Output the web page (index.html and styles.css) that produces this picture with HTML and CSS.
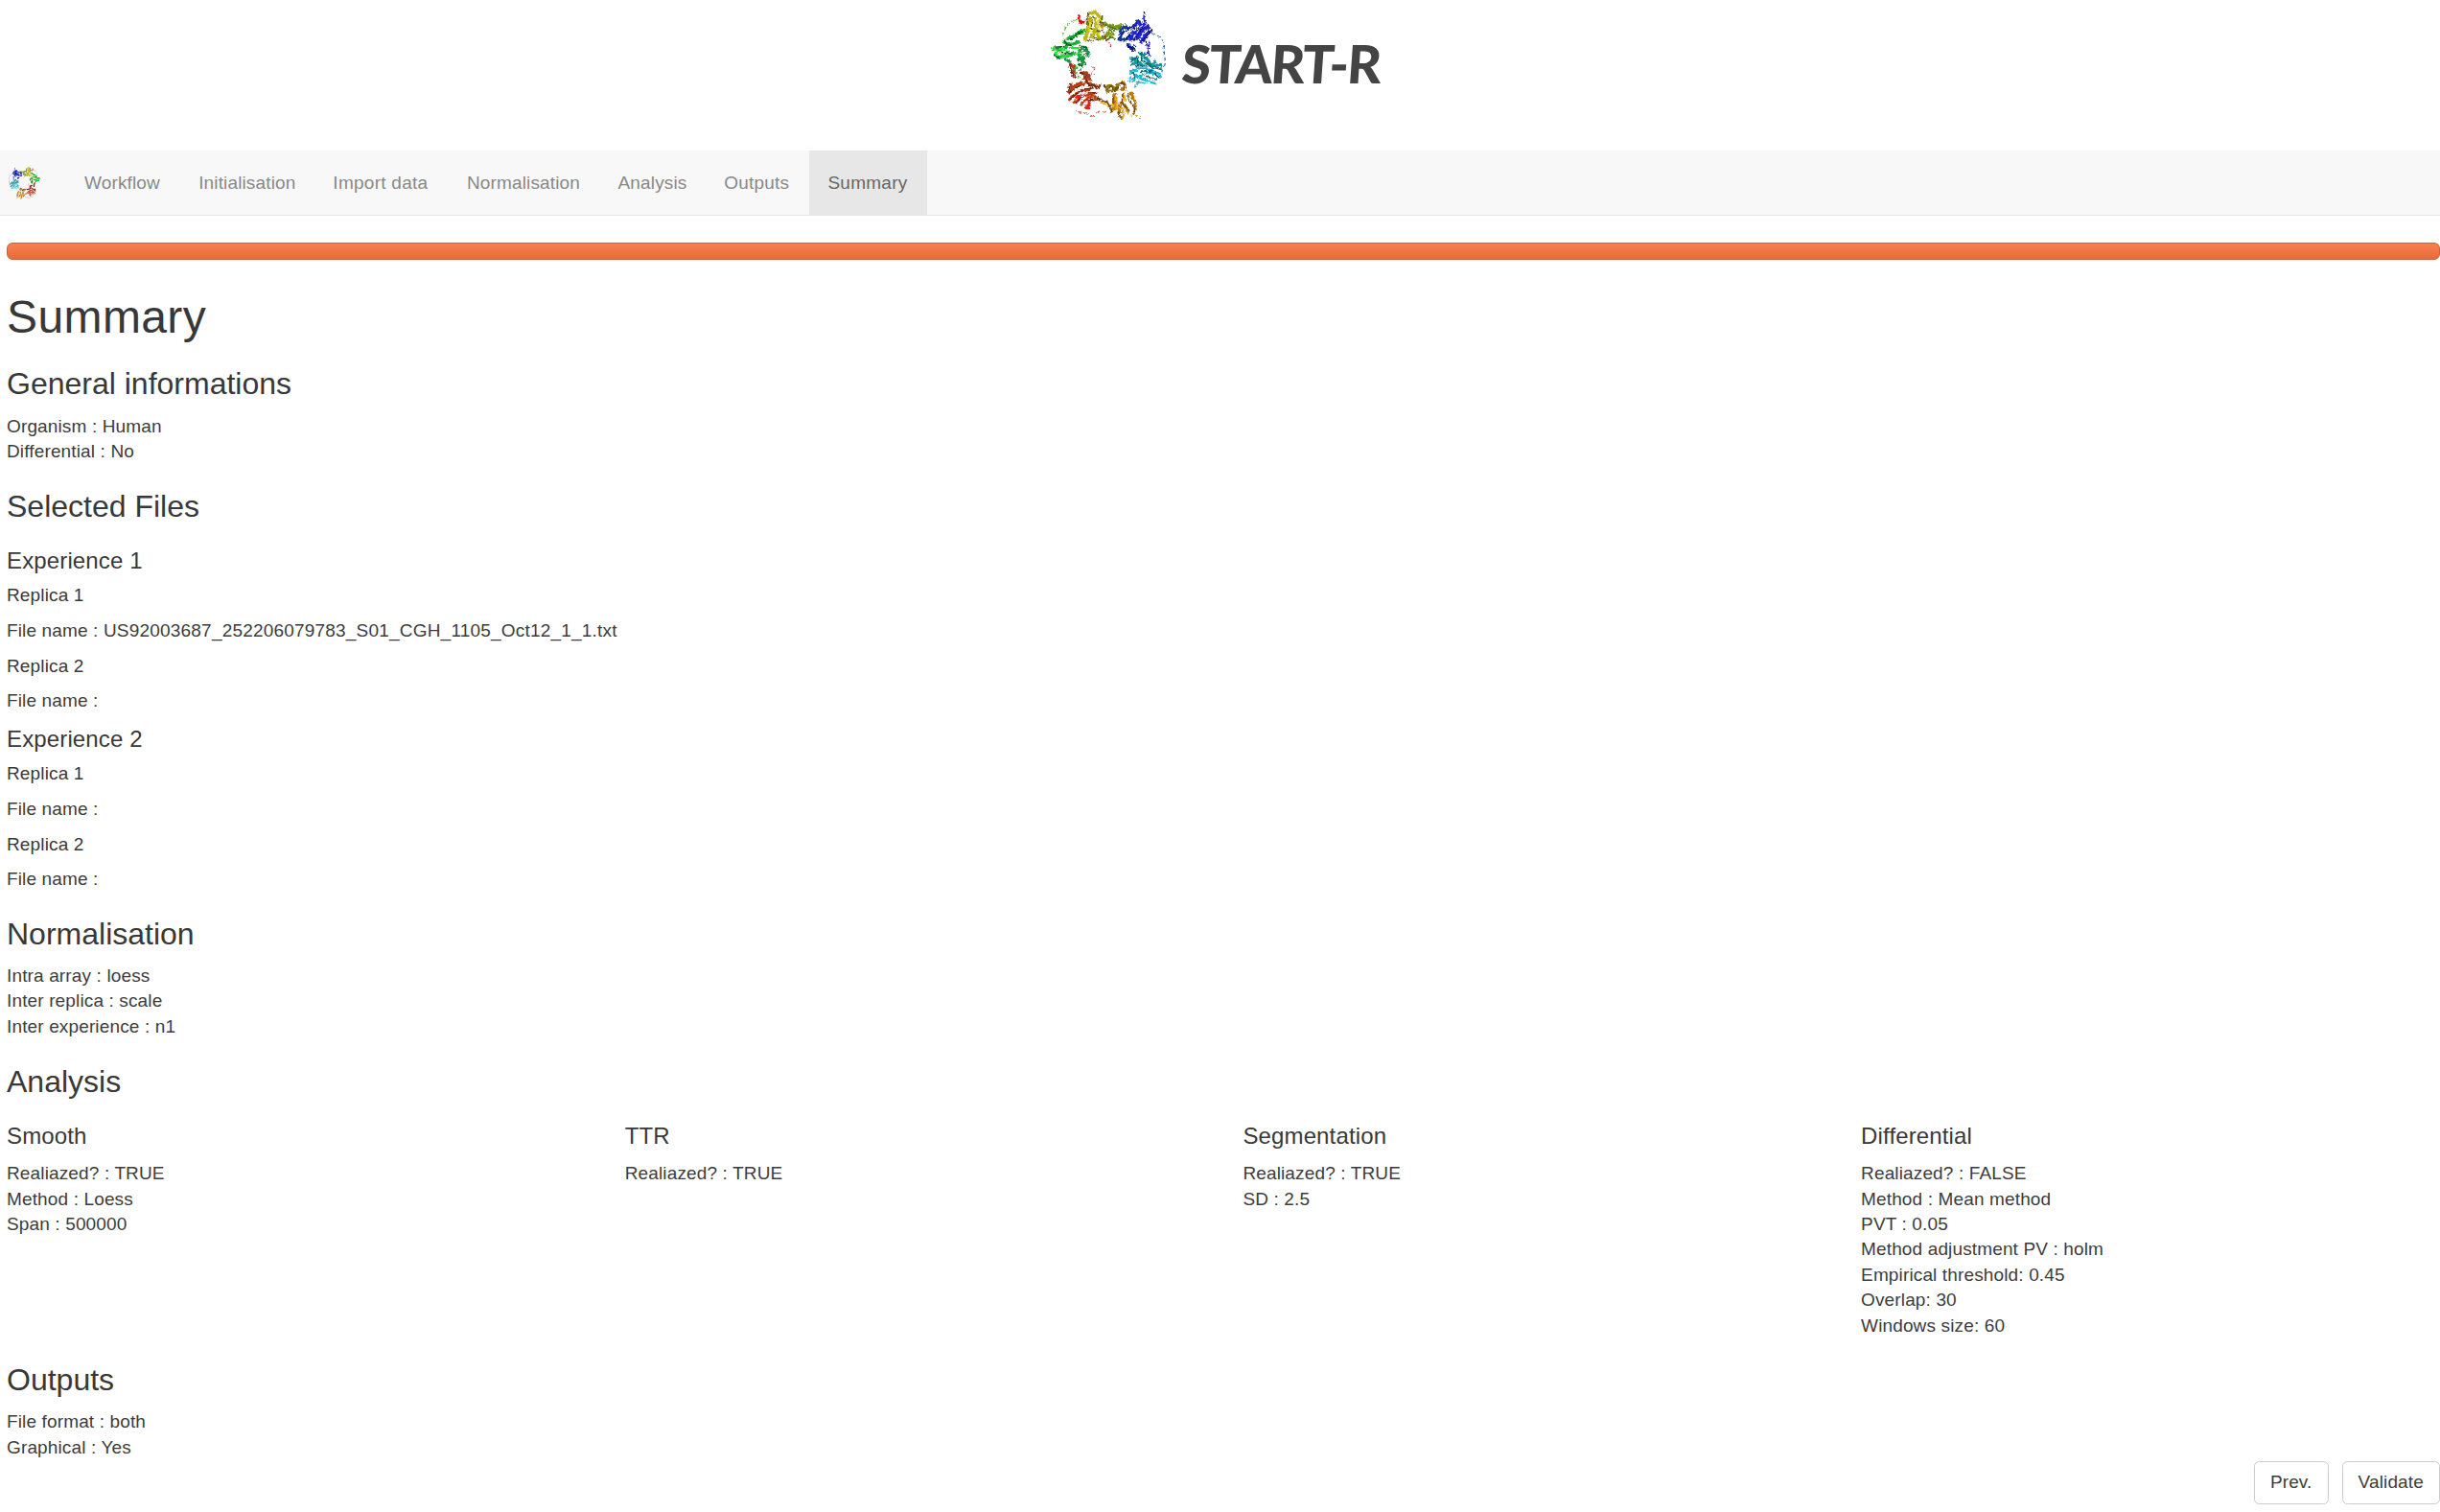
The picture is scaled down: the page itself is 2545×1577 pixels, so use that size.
FILE: index.html
```
<!DOCTYPE html>
<html lang="en">
<head>
<meta charset="utf-8">
<title>START-R</title>
<link rel="stylesheet" href="styles.css">
</head>
<body>
<header class="banner">
<svg class="logo" viewBox="0 0 420 405" aria-hidden="true">
<defs>
<filter id="ragged" x="0" y="0" width="420" height="405" filterUnits="userSpaceOnUse" color-interpolation-filters="sRGB">
<feTurbulence type="turbulence" baseFrequency="0.11" numOctaves="2" seed="4" result="n"/>
<feDisplacementMap in="SourceGraphic" in2="n" scale="11" xChannelSelector="R" yChannelSelector="G"/>
<feOffset dx="-3" dy="-2"/>
</filter>
<g id="ring" fill="none" stroke-linejoin="round">
<!-- yellow / olive lobe -->
<g stroke="#b9b51c" stroke-width="11"><path d="M150 45L172 37L190 58M158 55L148 92L140 130M172 55L174 92L158 120M188 62L195 88M176 95L186 125"/></g>
<g stroke="#dfe02a" stroke-width="5"><path d="M164 60L152 108M180 62L184 112M157 72L150 95"/></g>
<g stroke="#5f6412" stroke-width="5"><path d="M152 38L145 64L151 80M166 50L160 88L166 92M194 48L193 72L208 80M176 98L194 96M166 118L186 126M150 128L166 128"/></g>
<g stroke="#7d9a18" stroke-width="10"><path d="M200 74L232 84L258 80M186 124L206 112L232 106M206 112L216 96"/></g>
<g stroke="#4f7410" stroke-width="5"><path d="M200 80L240 92L262 80M192 112L208 126L222 116L236 124M214 92L234 100"/></g>
<g stroke="#e01010" stroke-width="8"><path d="M122 46L120 62L128 72L140 68"/></g>
<g stroke="#c02040" stroke-width="4" stroke-dasharray="7 5"><path d="M186 66L196 92L208 128L226 148M144 66L158 60"/></g>
<g stroke="#5abf30" stroke-width="4" stroke-dasharray="10 8"><path d="M70 112L78 90L92 70L118 60"/></g>
<!-- green lobe -->
<g stroke="#1fae38" stroke-width="10"><path d="M84 122L108 110L142 92M70 130L96 140L124 130M36 154L66 156L88 142M50 178L84 176L112 166M128 152L120 170L136 184L124 204"/></g>
<g stroke="#28e03a" stroke-width="6"><path d="M34 148L52 158L50 174M60 152L92 164M100 118L136 102M64 180L98 172M92 150L122 150"/></g>
<g stroke="#0b5a20" stroke-width="5"><path d="M76 124L80 138L98 142M92 126L134 98M44 148L78 146M62 166L98 168M122 142L144 148L150 168L136 172M116 188L140 186M118 198L132 210M44 170L60 184"/></g>
<g stroke="#18944a" stroke-width="9"><path d="M126 150L150 162L150 178M118 180L138 190M124 202L142 196M76 184L96 196"/></g>
<!-- blue lobe -->
<g stroke="#173a94" stroke-width="10"><path d="M246 98L270 84L284 92M242 122L266 126L284 108M256 88L250 120M272 138L286 152L296 148"/></g>
<g stroke="#2224d0" stroke-width="11"><path d="M292 86L308 66L316 84M280 128L300 100L326 74M302 124L318 98L344 84M314 136L326 110L350 98"/></g>
<g stroke="#0c1280" stroke-width="5"><path d="M254 108L290 82M270 122L298 84M290 128L316 92L340 78M322 130L342 100L352 94M274 142L288 160L296 142M284 148L298 158M330 126L336 152"/></g>
<g stroke="#2224d0" stroke-width="5"><path d="M326 38L324 58L330 78M342 128L338 168L346 178"/></g>
<g stroke="#2f78b8" stroke-width="4" stroke-dasharray="11 8"><path d="M350 104L376 116L388 138L388 166L392 196L384 218L374 238"/></g>
<!-- cyan lobe -->
<g stroke="#109a9c" stroke-width="10"><path d="M308 164L328 176L344 198M280 182L298 184L296 198L282 200M302 194L324 202L356 204M358 188L356 204L382 206"/></g>
<g stroke="#1cb7d4" stroke-width="7"><path d="M280 226L290 218L306 224M278 244L298 250M302 214L332 214L376 232M308 240L340 228L380 242M290 230L318 248L350 258L366 262"/></g>
<g stroke="#0b6a72" stroke-width="5"><path d="M314 162L318 188L344 202M284 190L306 178L304 202M300 206L338 206L382 218M312 226L350 224L374 244M280 232L292 226L296 246M330 238L366 250M330 164L326 182"/></g>
<g stroke="#2aa4b4" stroke-width="5" stroke-dasharray="9 4"><path d="M276 252L312 258L290 276M312 258L336 262"/></g>
<!-- gold lobe -->
<g stroke="#8c7a12" stroke-width="9"><path d="M198 272L220 268L236 278L246 262M206 286L228 284L246 278"/></g>
<g stroke="#c07a14" stroke-width="10"><path d="M246 262L262 258L264 274L250 282M234 294L234 340L220 344M282 288L296 318L298 344M252 318L246 356M262 326L278 352"/></g>
<g stroke="#e8b020" stroke-width="7"><path d="M186 318L214 330L234 328M238 300L240 344M262 292L266 318M256 336L262 368"/></g>
<g stroke="#6b4410" stroke-width="5"><path d="M200 268L210 280L222 268L232 288L244 270M250 258L266 264L262 284M228 300L228 326M274 290L278 314L296 338L294 360M258 294L256 322L276 344M188 314L210 320L226 352M242 350L256 374"/></g>
<g stroke="#c7b628" stroke-width="4" stroke-dasharray="8 6"><path d="M266 340L280 360L304 362L316 374M240 364L266 372"/></g>
<!-- red lobe -->
<g stroke="#a8401c" stroke-width="10"><path d="M96 198L106 214L104 244M126 230L146 228L152 244L134 248M140 254L164 268L192 272M98 262L92 280L116 264L132 260"/></g>
<g stroke="#c93a14" stroke-width="8"><path d="M84 292L106 272L142 262M88 314L120 286L158 280M102 322L132 300L170 296M126 330L150 306L186 304M138 238L160 254"/></g>
<g stroke="#6e2410" stroke-width="5"><path d="M92 200L98 224L112 244M128 224L140 240L158 236M144 248L152 268L170 264L176 278L190 266M90 292L124 268M94 310L130 280L164 276M110 324L144 292L178 290M92 264L90 286M144 316L190 310"/></g>
<g stroke="#f01c14" stroke-width="10"><path d="M138 336L152 338L154 318M110 308L130 298"/></g>
<g stroke="#d43c50" stroke-width="4" stroke-dasharray="7 5"><path d="M154 238L168 226L170 212L158 208"/></g>
<g stroke="#46b030" stroke-width="5" stroke-dasharray="9 5"><path d="M104 214L118 232L122 250M110 210L128 222"/></g>
<g stroke="#b8603c" stroke-width="4" stroke-dasharray="12 9"><path d="M118 350L136 352L164 364L178 352L206 350"/></g>
<!-- gaps between strands -->
<g stroke="#fff" stroke-width="3" stroke-dasharray="11 7"><path d="M166 58L164 84M104 126L136 112M64 148L92 154M262 104L292 94M292 118L318 80M308 130L334 92M318 196L344 212M306 232L350 234M244 300L248 338M270 288L286 326M98 294L136 276M110 314L150 290"/></g>
</g>
</defs>
<use href="#ring" filter="url(#ragged)"/>
</svg>
<span class="wordmark">START-R</span>
</header>
<nav class="navbar">
<a class="brand"><svg class="brand-icon" viewBox="28 30 368 348" preserveAspectRatio="none" aria-hidden="true"><use href="#ring"/></svg></a>
<a class="tab workflow">Workflow</a><a class="tab initialisation">Initialisation</a><a class="tab import">Import data</a><a class="tab normalisation">Normalisation</a><a class="tab analysis">Analysis</a><a class="tab outputs">Outputs</a><a class="tab active">Summary</a>
</nav>
<main class="content">
<div class="progress"></div>
<h1>Summary</h1>
<h3>General informations</h3>
<p>Organism : Human<br>Differential : No</p>
<h3>Selected Files</h3>
<section class="files">
<h4>Experience 1</h4>
<h5>Replica 1</h5>
<p>File name : <span class="filename">US92003687_252206079783_S01_CGH_1105_Oct12_1_1.txt</span></p>
<h5>Replica 2</h5>
<p>File name :</p>
<h4>Experience 2</h4>
<h5>Replica 1</h5>
<p>File name :</p>
<h5>Replica 2</h5>
<p>File name :</p>
</section>
<h3>Normalisation</h3>
<p>Intra array : loess<br>Inter replica : scale<br>Inter experience : n1</p>
<h3>Analysis</h3>
<section class="columns">
<div><h4>Smooth</h4><p>Realiazed? : TRUE<br>Method : Loess<br>Span : 500000</p></div>
<div><h4>TTR</h4><p>Realiazed? : TRUE</p></div>
<div><h4>Segmentation</h4><p>Realiazed? : TRUE<br>SD : 2.5</p></div>
<div><h4>Differential</h4><p>Realiazed? : FALSE<br>Method : Mean method<br>PVT : 0.05<br>Method adjustment PV : holm<br>Empirical threshold: 0.45<br>Overlap: 30<br>Windows size: 60</p></div>
</section>
<h3>Outputs</h3>
<p class="last">File format : both<br>Graphical : Yes</p>
<div class="actions"><button class="prev">Prev.</button><button class="validate">Validate</button></div>
</main>
</body>
</html>
```
FILE: styles.css
```
* { box-sizing: border-box; }
body {
  margin: 0;
  background: #fff;
  color: #3c3c3c;
  font: 19px/26.4px "Liberation Sans", Arial, sans-serif;
  letter-spacing: 0.14px;
  overflow: hidden;
}
.banner {
  display: flex;
  height: 157.4px;
  padding-left: 1085px;
}
.logo { width: 140px; height: 135px; flex: none; }
.wordmark {
  margin: 30px 0 0 6px;
  font: 900 55px/72px Lato, sans-serif;
  letter-spacing: -1.8px;
  color: #444;
  white-space: nowrap;
  transform: skewX(-4deg);
}
.navbar {
  display: flex;
  height: 67.3px;
  background: #f8f8f8;
  border-bottom: 1.32px solid #e7e7e7;
}
.brand { width: 68.2px; padding: 16.5px 0 0 9px; }
.brand-icon { display: block; width: 33.5px; height: 34px; transform: scaleX(-1); filter: contrast(1.5) brightness(0.9); }
.tab { padding: 20.4px 0 0 19.8px; color: #888; white-space: nowrap; }
.workflow { width: 119.2px; }
.initialisation { width: 140.2px; }
.import { width: 139.6px; letter-spacing: 0.26px; }
.normalisation { width: 157.6px; }
.analysis { width: 110.8px; }
.outputs { width: 108.1px; letter-spacing: 0.2px; }
.tab.active { width: 123px; background: #e7e7e7; color: #666; letter-spacing: 0.25px; }
.content { padding: 28px 0 0 7px; }
.progress {
  height: 18.5px;
  border: 1.32px solid #d2613a;
  border-radius: 6px;
  background: linear-gradient(#f88150, #e96a38);
}
h1, h3, h4, h5 { font-weight: 500; line-height: 1.1; color: #383838; }
h1 { margin: 33.6px 0 13.2px; font-size: 48px; line-height: 52.3px; letter-spacing: 0.4px; }
h3 { margin: 26.4px 0 13.2px; font-size: 32px; line-height: 34.85px; letter-spacing: 0; }
h4 { margin: 13.2px 0; font-size: 24px; line-height: 26.14px; }
h5 { margin: 13.4px 0 13.2px; font-size: 19px; line-height: 20.33px; }
p { margin: 0 0 13.2px; }
.files { display: flow-root; }
.filename { letter-spacing: 0.2px; }
.files p:last-child, .columns p { margin-bottom: 0; }
.columns { display: grid; grid-template-columns: repeat(4, 644.7px); }
.last { margin: 0; }
.actions { display: flex; justify-content: flex-end; gap: 13.8px; margin-top: 0.4px; }
button {
  height: 44.9px;
  padding: 0;
  border: 1.32px solid #ccc;
  border-radius: 5.3px;
  background: #fff;
  color: #3c3c3c;
  font: inherit;
  letter-spacing: inherit;
}
.prev { width: 78px; }
.validate { width: 102.5px; }
```
